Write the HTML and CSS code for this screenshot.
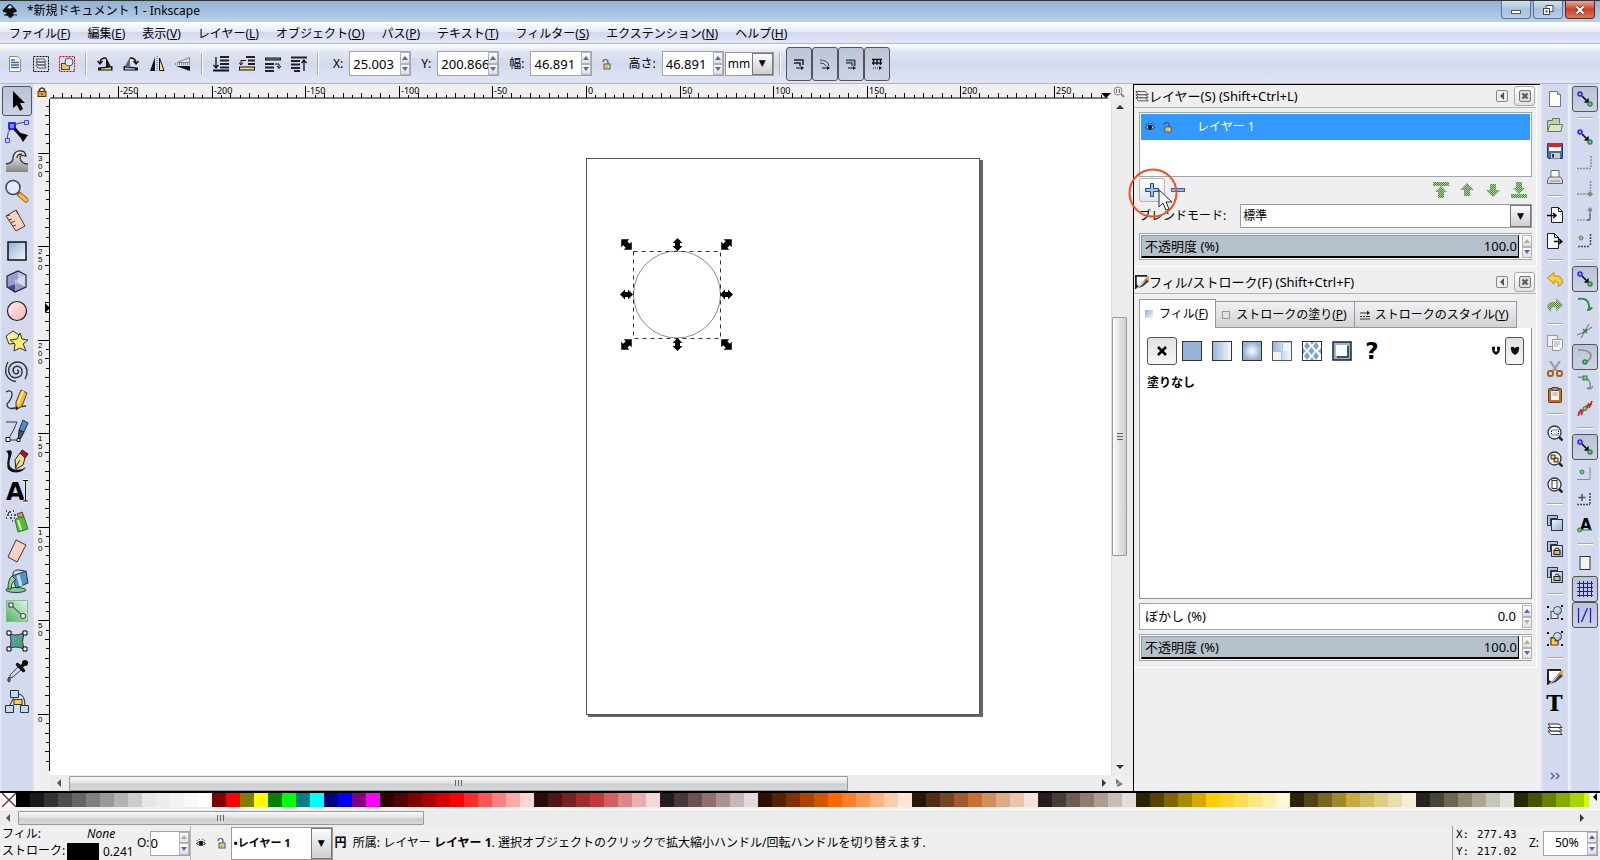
FILE: index.html
```html
<!DOCTYPE html>
<html lang="ja">
<head>
<meta charset="utf-8">
<title>*新規ドキュメント 1 - Inkscape</title>
<link rel="stylesheet" href="styles.css">
</head>
<body>
<svg class="defs" aria-hidden="true">
  <defs>
    <linearGradient id="gBlue" x1="0" y1="0" x2="1" y2="1"><stop offset="0" stop-color="#f4f8fc"/><stop offset="1" stop-color="#8fb0d4"/></linearGradient>
    <linearGradient id="gBlueR" x1="1" y1="0" x2="0" y2="0"><stop offset="0" stop-color="#f4f8fc"/><stop offset="1" stop-color="#9ab6d6"/></linearGradient>
    <linearGradient id="gRect" x1="0" y1="0" x2="1" y2="1"><stop offset="0" stop-color="#8fb0d4"/><stop offset="1" stop-color="#f4f8fc"/></linearGradient>
    <radialGradient id="gRad"><stop offset="0" stop-color="#f8fbff"/><stop offset="1" stop-color="#8fb0d4"/></radialGradient>
    <linearGradient id="gPink" x1="0" y1="0" x2="1" y2="1"><stop offset="0" stop-color="#fff0f0"/><stop offset="1" stop-color="#ffb0b4"/></linearGradient>
    <linearGradient id="gGrey" x1="0" y1="0" x2="0" y2="1"><stop offset="0" stop-color="#ffffff"/><stop offset="1" stop-color="#888888"/></linearGradient>
    <linearGradient id="gGreen" x1="0" y1="1" x2="1" y2="0"><stop offset="0" stop-color="#4fae62"/><stop offset="1" stop-color="#e6f8e8"/></linearGradient>
    <linearGradient id="gMesh" x1="0" y1="0" x2="1" y2="1"><stop offset="0" stop-color="#6a9fd0"/><stop offset="1" stop-color="#3fa050"/></linearGradient>
    <pattern id="pGreen" width="2" height="2" patternUnits="userSpaceOnUse"><rect width="2" height="2" fill="#b4cfa6"/><rect width="1" height="1" fill="#4c8538"/><rect x="1" y="1" width="1" height="1" fill="#4c8538"/></pattern>

    <symbol id="lock" viewBox="0 0 10 10"><path d="M2.500 5V2.500Q5-.5 7.500 2.500V5" fill="none" stroke="#333" stroke-width="1.500"/><rect x="1" y="4.500" width="8" height="5" fill="#e3a716" stroke="#5a3a00"/><path d="M5 6v2" stroke="#222"/></symbol>
    <symbol id="unlock" viewBox="0 0 10 12"><path d="M2 4Q2 1.500 4.500 1.500T7 4v2" fill="none" stroke="#555" stroke-width="1.200"/><rect x="3" y="6" width="6" height="5" fill="#f0dc90" stroke="#555"/><path d="M4 8h3M4 9.500h3" stroke="#b89a30" stroke-width=".7"/></symbol>
    <symbol id="eye" viewBox="0 0 10 10"><path d="M.5 5.500Q5 1 9.500 5.500Q5 9.500.5 5.500Z" fill="#ddd" stroke="#222"/><circle cx="5" cy="5.300" r="2" fill="#111"/><path d="M1.500 3L.8 2M3.500 2L3 .8M6.500 2L7 .8M8.500 3l.7-1" stroke="#222" stroke-width=".8"/></symbol>
    <symbol id="layers" viewBox="0 0 16 16"><g fill="#fff" stroke="#333"><path d="M1 10h11l3 3.500H4z"/><path d="M1 6.500h11l3 3.500H4z"/><path d="M1 3h11l3 3.500H4z"/></g></symbol>
    <symbol id="fillstroke" viewBox="0 0 16 16"><path d="M0 0H14V3L1 16H0z" fill="#222"/><path d="M2 2H14L5 12Q2 13 2 9z" fill="#fff"/><path d="M14 4l2 3-7 6-6 2 5-4z" fill="#444"/><path d="M13 2l3-1v6l-3-2z" fill="#f2a51e"/></symbol>
    <symbol id="snapnode" viewBox="0 0 16 16"><path d="M5 5l6 6M11 7.500V11H7.500" fill="none" stroke="#000" stroke-width="1.500"/><circle cx="3" cy="3" r="2" fill="#aaf" stroke="#2626ff" stroke-width="1.500"/><circle cx="13" cy="13" r="2" fill="#7cc08a" stroke="#258a3c" stroke-width="1.500"/></symbol>
    <symbol id="mag" viewBox="0 0 16 16"><path d="M12 12l3.500 3.500" stroke="#222" stroke-width="2.500"/><circle cx="7.500" cy="7.500" r="6.500" fill="#eef3f7" stroke="#333" stroke-width="1.300"/></symbol>
    <symbol id="dup" viewBox="0 0 16 16"><path d="M.5.5h10v3h-7v7h-3z" fill="#a9c4dd" stroke="#334"/><rect x="4.500" y="4.500" width="11" height="11" fill="url(#gBlue)" stroke="#334"/></symbol>
    <symbol id="grp" viewBox="0 0 16 16"><path d="M0 1h2v2H0zM14 0h2v2h-2zM0 13h2v2H0zM14 13h2v2h-2z" fill="#111"/><rect x="4" y="6.500" width="7" height="7" fill="#dfe8ef" stroke="#444"/><circle cx="10.500" cy="5.500" r="4" fill="url(#gBlue)" stroke="#345"/></symbol>
    <symbol id="page" viewBox="0 0 16 16"><path d="M2.500.5h8l3 3v12h-11z" fill="#fcfcfa" stroke="#777"/><path d="M10.500.5v3h3" fill="#ddd" stroke="#777"/></symbol>
    <symbol id="up" viewBox="0 0 16 16"><path d="M8 1l7 7h-4v6H5V8H1z" fill="url(#pGreen)"/></symbol>
    <symbol id="bars" viewBox="0 0 16 16"><path d="M7 1h9M7 4.500h9M7 8h9M7 11.500h9" stroke="#222" stroke-width="2"/></symbol>
  </defs>
</svg>

<header class="titlebar">
  <svg class="i16" viewBox="0 0 16 16"><path d="M8 1Q9 .8 14.500 7Q16 9 12 9.500Q10 10 12 11Q14 12 11 13Q8 17 6 13Q2 12 4 11Q6 10 3 9.500Q0 9 1 7Q6 .8 8 1z" fill="#111"/><path d="M8 2l3 3-2-.5-1 1.500-1.500-1L5 5.500z" fill="#dfe9f5"/><path d="M2 12h2M13 12h2" stroke="#111"/></svg>
  <h1 class="title">*新規ドキュメント 1 - Inkscape</h1>
  <div class="winbtns">
    <button class="winbtn" aria-label="最小化"><svg class="i12" viewBox="0 0 12 12"><rect x="1.500" y="6.500" width="9" height="3" fill="#fff" stroke="#556"/></svg></button>
    <button class="winbtn" aria-label="元に戻す"><svg class="i12" viewBox="0 0 12 12"><path d="M4 4V1.500h7v6H8" fill="#fff" stroke="#445"/><rect x="1.500" y="4.500" width="6" height="6" fill="#fff" stroke="#445"/><path d="M3.500 6.500h2v2h-2z" fill="#445"/></svg></button>
    <button class="winbtn close" aria-label="閉じる"><svg class="i12" viewBox="0 0 12 12"><path d="M2.500 2.500l7 7m0-7l-7 7" stroke="#633" stroke-width="3.500"/><path d="M2.500 2.500l7 7m0-7l-7 7" stroke="#fff" stroke-width="2"/></svg></button>
  </div>
</header>

<nav class="menubar">
  <a href="#">ファイル(<u>F</u>)</a><a href="#">編集(<u>E</u>)</a><a href="#">表示(<u>V</u>)</a><a href="#">レイヤー(<u>L</u>)</a><a href="#">オブジェクト(<u>O</u>)</a><a href="#">パス(<u>P</u>)</a><a href="#">テキスト(<u>T</u>)</a><a href="#">フィルター(<u>S</u>)</a><a href="#">エクステンション(<u>N</u>)</a><a href="#">ヘルプ(<u>H</u>)</a>
</nav>

<div class="toolbar">
  <button class="tb" aria-label="すべて選択"><svg class="i16" viewBox="0 0 16 16"><path d="M2.500.5h8l3 3v12h-11z" fill="#fff" stroke="#888"/><path d="M4 4h4M4 6.500h8M4 9h8M4 11.500h8" stroke="#36a" stroke-width="1.300"/></svg></button>
  <button class="tb" aria-label="全レイヤー選択"><svg class="i16" viewBox="0 0 16 16"><rect x=".5" y=".5" width="15" height="15" fill="none" stroke="#000" stroke-dasharray="2 1"/><path d="M3 9h8l2 3H5zM3 6h8l2 3H5zM3 3h8l2 3H5z" fill="#eee" stroke="#555"/></svg></button>
  <button class="tb" aria-label="選択解除"><svg class="i16" viewBox="0 0 16 16"><rect x=".5" y=".5" width="15" height="15" fill="none" stroke="#d00" stroke-dasharray="2 1"/><rect x="2.500" y="7.500" width="8" height="6" fill="#f6c54a" stroke="#444"/><circle cx="10" cy="6" r="4" fill="#dbe8f5" stroke="#456"/></svg></button>
  <span class="vsep"></span>
  <button class="tb" aria-label="反時計回り"><svg class="i16" viewBox="0 0 16 16"><path d="M9 1l5 10H9z" fill="#111"/><path d="M1 11.500L15.500 10v4.500H1z" fill="#111"/><path d="M4 12.500l10-1v2H4z" fill="#f2d674"/><path d="M9 2Q3 2 3 7M.5 5L3 8l2.500-3" fill="none" stroke="#111" stroke-width="1.400"/></svg></button>
  <button class="tb" aria-label="時計回り"><svg class="i16" viewBox="0 0 16 16"><path d="M7 1L2 10h5z" fill="#666"/><path d="M15 11.500L.5 10v4.500H15z" fill="#111"/><path d="M2 11.500l10 1v1H2z" fill="#bcd0e4"/><path d="M7 2Q13 2 13 7M10.500 5L13 8l2.500-3" fill="none" stroke="#111" stroke-width="1.400"/></svg></button>
  <button class="tb" aria-label="左右反転"><svg class="i16" viewBox="0 0 16 16"><path d="M6 1v14H1z" fill="#111"/><path d="M10.500 2v12.500H15z" fill="#f5e29a" stroke="#111"/><path d="M8 0v16" stroke="#555" stroke-dasharray="1 1"/></svg></button>
  <button class="tb" aria-label="上下反転"><svg class="i16" viewBox="0 0 16 16"><path d="M14.500 1.500v5H2z" fill="#dde" stroke="#888"/><path d="M15 15v-5H1z" fill="#111"/><path d="M0 8h16" stroke="#555" stroke-dasharray="1 1"/></svg></button>
  <span class="vsep"></span>
  <button class="tb" aria-label="最背面へ"><svg class="i16" viewBox="0 0 16 16"><use href="#bars"/><path d="M0 14.500h16" stroke="#111" stroke-width="2"/><path d="M3 1v11M.5 9L3 12l2.500-3" fill="none" stroke="#111" stroke-width="1.300"/></svg></button>
  <button class="tb" aria-label="背面へ"><svg class="i16" viewBox="0 0 16 16"><path d="M7 1h9M9 4.500h7M9 8h7" stroke="#222" stroke-width="2"/><rect x=".5" y="11" width="15" height="3" fill="#f5d860" stroke="#111"/><path d="M7 4.500H2v4M0 6.500L2 9l2-2.500" fill="none" stroke="#111"/></svg></button>
  <button class="tb" aria-label="前面へ"><svg class="i16" viewBox="0 0 16 16"><path d="M0 11.500h9M0 15h9M0 8h9" stroke="#222" stroke-width="2"/><rect x=".5" y="2" width="15" height="2" fill="#889" stroke="#111"/><path d="M10 8h4v4M12 10l2 2.500 2-2.500" fill="none" stroke="#111"/></svg></button>
  <button class="tb" aria-label="最前面へ"><svg class="i16" viewBox="0 0 16 16"><path d="M0 1.500h16M0 5h9M0 8.500h9M0 12h9M3 15h6" stroke="#222" stroke-width="2"/><path d="M13 15V4M10.500 7L13 4l2.500 3" fill="none" stroke="#111" stroke-width="1.300"/></svg></button>
  <span class="vsep"></span>
  <label class="fld gx">X:<span class="spin"><input class="num" value="25.003"><span class="arrows"><button aria-label="増"></button><button aria-label="減"></button></span></span></label>
  <label class="fld">Y:<span class="spin"><input class="num" value="200.866"><span class="arrows"><button aria-label="増"></button><button aria-label="減"></button></span></span></label>
  <label class="fld">幅:<span class="spin"><input class="num" value="46.891"><span class="arrows"><button aria-label="増"></button><button aria-label="減"></button></span></span></label>
  <button class="lockbtn" aria-label="縦横比を固定"><svg class="i12"><use href="#unlock"/></svg></button>
  <label class="fld last">高さ:<span class="spin"><input class="num" value="46.891"><span class="arrows"><button aria-label="増"></button><button aria-label="減"></button></span></span></label>
  <span class="combo unit"><select aria-label="単位"><option>mm</option></select></span>
  <span class="vsep"></span>
  <div class="toggles">
    <button aria-label="ストローク幅を拡大縮小"><svg class="i12" viewBox="0 0 12 12"><path d="M1 2h9v5M1 5h6v3" fill="none" stroke="#222" stroke-width="1.500"/><path d="M3 10h7" stroke="#111"/><path d="M8 8l3 2-3 2z" fill="#111"/></svg></button>
    <button aria-label="角の半径を拡大縮小"><svg class="i12" viewBox="0 0 12 12"><path d="M1 2q8 0 9 6M1 5q5 0 6 3" fill="none" stroke="#444"/><path d="M3 10h7" stroke="#111"/><path d="M8 8l3 2-3 2z" fill="#111"/></svg></button>
    <button aria-label="グラデーションを変形"><svg class="i12" viewBox="0 0 12 12"><path d="M1 2h9v6H7V5H1z" fill="#7fa6c8"/><path d="M1 2h9v6M1 5h6v3" fill="none" stroke="#222"/><path d="M3 10h7" stroke="#111"/><path d="M8 8l3 2-3 2z" fill="#111"/></svg></button>
    <button aria-label="パターンを変形"><svg class="i12" viewBox="0 0 12 12"><path d="M1 1.500h10M1 5h10M2.500 1v6M6 1v6M9.500 1v6" stroke="#111" stroke-width="1.300"/><path d="M2 10h7" stroke="#111" stroke-dasharray="1 1"/><path d="M8 8l3 2-3 2z" fill="#111"/></svg></button>
  </div>
</div>

<main class="work">
  <aside class="toolbox">
    <button class="on" aria-label="選択"><svg viewBox="0 0 24 24"><path d="M8 2v17l4-3 3 6 3-2-3-6h5z" fill="#000"/></svg></button>
    <button aria-label="ノード"><svg viewBox="0 0 24 24"><path d="M2 21Q2 4 21 3" fill="none" stroke="#444"/><path d="M12 13l11 3-5 7z" fill="#000"/><path d="M9 9l7 8" stroke="#000" stroke-width="3"/><rect x="4" y="4" width="6" height="6" fill="#88f" stroke="#00f" stroke-width="1.500"/><path d="M19.500 1.500h4v4h-4zM.5 19.500h4v4h-4z" fill="#ccf" stroke="#44f"/></svg></button>
    <button aria-label="微調整"><svg viewBox="0 0 24 24"><path d="M1 15Q9 14 8 8Q10 1 16 2Q20 2 21 7Q15 5 15 9Q16 15 23 15V23H1z" fill="url(#gGrey)"/><path d="M1 15Q9 14 8 8Q10 1 16 2Q20 2 21 7Q15 5 15 9Q16 15 23 15M12 9q0-4 5-4" fill="none" stroke="#333" stroke-width="1.300"/></svg></button>
    <button aria-label="ズーム"><svg viewBox="0 0 24 24"><path d="M14 15l7 6" stroke="#a66a10" stroke-width="5" stroke-linecap="round"/><path d="M15 16l6 5" stroke="#ffbf3c" stroke-width="3" stroke-linecap="round"/><circle cx="8" cy="8.500" r="7" fill="#dfeefa" stroke="#444" stroke-width="1.500"/></svg></button>
    <button aria-label="測定"><svg viewBox="0 0 24 24"><path d="M1 7L11 1l9 16-9 5z" fill="#f8d4c4" stroke="#533"/><path d="M11 1l2 4M1 7l4-1M4 11l3-1M6 14l4-2M8 17l3-1" stroke="#533"/></svg></button>
    <button aria-label="矩形"><svg viewBox="0 0 24 24"><rect x="3" y="3" width="18" height="18" fill="url(#gRect)" stroke="#111" stroke-width="1.500"/></svg></button>
    <button aria-label="3Dボックス"><svg viewBox="0 0 24 24"><path d="M2 7l11-5 8 4v12l-11 5-8-5z" fill="#dcdcf4"/><path d="M2 7l11-5v12l-11 4z" fill="#9a9ad0"/><path d="M2 18l11-4 8 4-11 5z" fill="#4a4a94"/><path d="M13 2l8 4v12l-8-4z" fill="#c4c4ea"/><path d="M10 11l11-5v12l-11 5z" fill="#ececfa" opacity=".5"/><path d="M2 7l11-5 8 4v12l-11 5-8-5z" fill="none" stroke="#223" stroke-width="1.200"/></svg></button>
    <button aria-label="円"><svg viewBox="0 0 24 24"><circle cx="12" cy="12" r="9.500" fill="url(#gPink)" stroke="#222" stroke-width="1.200"/></svg></button>
    <button aria-label="星形"><svg viewBox="0 0 24 24"><path d="M1 7l7-5 6 4-1 8-9 1z" fill="#fff2a0" stroke="#333"/><path d="M15 4l2 6 6 1-5 4 3 7-6-3-6 3 1-7-5-4 7-1z" fill="#ffec70" stroke="#333"/></svg></button>
    <button aria-label="らせん"><svg viewBox="0 0 24 24"><path d="M12 11q2 0 1.500 2.500Q11.500 16 9 14Q7 11 9 8.500Q12 6 15.500 8.500Q18.500 12 16 16.500Q12 20 7 18Q2.500 14 4 8.500Q7 2.500 14 3Q20.500 4.500 22 11Q22.500 16 20 20M3 3Q0 8 1 15Q4 22 11 22.500" fill="none" stroke="#333" stroke-width="1.400"/></svg></button>
    <button aria-label="鉛筆"><svg viewBox="0 0 24 24"><path d="M1 3q6-3 6 2T2 15q0 6 8 4t11-2" fill="none" stroke="#333" stroke-width="1.300"/><path d="M16 1l6 3-5 13-6 4 0-8z" fill="#f9b62a" stroke="#543"/><path d="M18 2l-5 13" stroke="#fff3a8" stroke-width="2"/><path d="M11 17v4l3-2z" fill="#222"/></svg></button>
    <button aria-label="ペン"><svg viewBox="0 0 24 24"><path d="M1 3h11q-3 8-9 18h11" fill="none" stroke="#333"/><path d="M18 1l5 3-4 9-5-2z" fill="#4f8ec4" stroke="#234"/><path d="M14 11l5 2-3 6-3 3z" fill="#456" stroke="#222"/><path d="M1 18.500h4v4H1zM12 19.500h3v3h-3z" fill="#fff" stroke="#111"/></svg></button>
    <button aria-label="カリグラフィ"><svg viewBox="0 0 24 24"><path d="M1 2q8-3 5 5-4 11 2 13 8 2 13-2-4 7-14 5Q0 21 3 9q1-5-2-7z" fill="#111"/><path d="M17 1l6 4-3 4-5-4z" fill="#b01818" stroke="#311"/><path d="M15 4l5 5-2 7-7 4-1-9z" fill="#f8dc8c" stroke="#222"/><path d="M10 19l5-8" stroke="#222"/></svg></button>
    <button aria-label="テキスト"><svg viewBox="0 0 24 24"><text x="1" y="21" class="glyphA">A</text><path d="M18 1.500h2l.5 1 .5-1h2M20.500 2v19M18 22h2l.5-1 .5 1h2" fill="none" stroke="#fff" stroke-width="3"/><path d="M18 1.500h2l.5 1 .5-1h2M20.500 2v19M18 22h2l.5-1 .5 1h2" fill="none" stroke="#111" stroke-width="1.200"/></svg></button>
    <button aria-label="スプレー"><svg viewBox="0 0 24 24"><path d="M1 2h1M4 3h2M8 2h1M2 6h2M6 6h1M9 6h2M1 9h1M5 9h2M9 9h1M7 12h1M3 4h1" stroke="#222" stroke-width="1.500"/><path d="M12 5l5-2 2 5-5 1z" fill="#c99c5a" stroke="#543"/><path d="M10 11q2-3 9-3l4 12-10 3z" fill="#5eb637" stroke="#274"/><path d="M13 11l3 10" stroke="#d8f8b8" stroke-width="2"/></svg></button>
    <button aria-label="消しゴム"><svg viewBox="0 0 24 24"><path d="M11 1l10 5-9 17-9-5z" fill="#f9d2c4" stroke="#433"/></svg></button>
    <button aria-label="塗りつぶし"><svg viewBox="0 0 24 24"><ellipse cx="11" cy="21" rx="10" ry="2.500" fill="#7bd08a" stroke="#242"/><path d="M7 7l14-5 2 12-12 5z" fill="#5b92bc" stroke="#234"/><path d="M13 6l3 11" stroke="#bfe0f4" stroke-width="3"/><path d="M7 7q-4 3-4 13h3q0-7 5-9z" fill="#8fd49a" stroke="#242"/><path d="M8 7Q7 1 13 1t8 2" fill="none" stroke="#333"/></svg></button>
    <button aria-label="グラデーション"><svg viewBox="0 0 24 24"><rect x="1.500" y="1.500" width="21" height="21" fill="url(#gGreen)" stroke="#7fc08c"/><path d="M7 7l12 11" stroke="#333"/><path d="M4 4h4v4H4z" fill="#fff" stroke="#333"/><circle cx="18" cy="17" r="2.500" fill="#fff" stroke="#333"/></svg></button>
    <button aria-label="メッシュ"><svg viewBox="0 0 24 24"><path d="M4 4q5 4 15 0-3 9 0 16-9-4-15 0 4-8 0-16z" fill="url(#gMesh)" stroke="#333"/><path d="M2 2h4v4H2zM18 2h4v4h-4zM2 18h4v4H2zM18 18h4v4h-4z" fill="#fff" stroke="#000"/></svg></button>
    <button aria-label="スポイト"><svg viewBox="0 0 24 24"><path d="M14 7l3 3-9 8-3 1 0-3z" fill="#c4dcf0" stroke="#345"/><path d="M12.500 5.500l6 6M16 8l4.500-4.500" stroke="#111" stroke-width="3.500" stroke-linecap="round"/><circle cx="20" cy="4" r="3" fill="#111"/><path d="M4 18q-2.500 4 0 5 2.500-1 0-5" fill="#3975b5" stroke="#234"/></svg></button>
    <button aria-label="コネクター"><svg viewBox="0 0 24 24"><path d="M9 8L4 18M14 5q6 1 6 12" fill="none" stroke="#222"/><path d="M5.500 1.500h8v7h-8zM.5 16.500h8v7h-8zM15.500 16.500h8v7h-8z" fill="#c4d8ee" stroke="#234"/><rect x="9" y="10.500" width="8" height="5" fill="#ffd04a" stroke="#432"/></svg></button>
  </aside>

  <section class="canvas-area" aria-label="キャンバス">
    <div class="corner"><svg class="i10"><use href="#lock"/></svg></div>
    <svg class="ruler-h" id="rulerH"></svg>
    <div class="corner top"><svg class="i12" viewBox="0 0 12 12"><circle cx="5" cy="5" r="4" fill="#eee" stroke="#888"/><path d="M3.500 3v4M6.500 3v4M5 4h.5M5 6h.5" stroke="#777"/><path d="M8 8l3 3" stroke="#888" stroke-width="2"/></svg></div>
    <svg class="ruler-v" id="rulerV"></svg>
    <div class="canvas">
      <svg class="drawing" width="1061" height="676" viewBox="50 99 1061 676">
        <path d="M588 715.500h393.500V160" fill="none" stroke="#666" stroke-width="3"/>
        <rect x="586.500" y="158.500" width="393" height="556" fill="#fff" stroke="#555"/>
        <circle cx="677" cy="294.500" r="43.500" fill="none" stroke="#888"/>
        <rect x="633.500" y="251.500" width="87" height="87" fill="none" stroke="#333" stroke-dasharray="4 4"/>
        <defs><path id="ar" d="M-6.500 0L-1.500-5V-2.500H1.500V-5L6.500 0L1.500 5V2.500H-1.500V5z"/></defs>
        <use href="#ar" transform="translate(626.500 294.500)"/><use href="#ar" transform="translate(726.500 294.500)"/>
        <use href="#ar" transform="translate(677.500 244.500) rotate(90)"/><use href="#ar" transform="translate(677.500 344.500) rotate(90)"/>
        <use href="#ar" transform="translate(626.500 244.500) rotate(45) scale(1.150)"/><use href="#ar" transform="translate(726.500 344.500) rotate(45) scale(1.150)"/>
        <use href="#ar" transform="translate(726.500 244.500) rotate(-45) scale(1.150)"/><use href="#ar" transform="translate(626.500 344.500) rotate(-45) scale(1.150)"/>
      </svg>
    </div>
    <div class="vscroll"><i class="tri up"></i><div class="vtrack"><div class="thumb"><span class="grip"></span></div></div><i class="tri down"></i></div>
    <div class="corner"></div>
    <div class="hscroll"><i class="tri left"></i><div class="htrack"><div class="thumb"><span class="grip"></span></div></div><i class="tri right"></i></div>
    <div class="corner top"><svg class="i10" viewBox="0 0 10 10"><path d="M2 1l7 5-6 3z" fill="#8a9"/><path d="M2 1l3 2-3 3z" fill="#4a8a4a"/><path d="M3 9l6-3-3-1z" fill="#a55"/></svg></div>
  </section>

  <section class="dock">
    <div class="panel">
      <header class="phead"><svg class="i14"><use href="#layers"/></svg><h2>レイヤー(S) (Shift+Ctrl+L)</h2>
        <button class="iconify" aria-label="最小化"><i class="tri left"></i></button>
        <button class="pclose" aria-label="閉じる"><svg class="i12" viewBox="0 0 12 12"><rect x=".5" y=".5" width="11" height="11" rx="1.500" fill="#ddd" stroke="#777"/><path d="M3.500 3.500l5 5m0-5l-5 5" stroke="#555" stroke-width="2"/></svg></button>
      </header>
      <div class="pbody">
        <ul class="layerlist"><li><svg class="i10"><use href="#eye"/></svg><svg class="i12"><use href="#unlock"/></svg><span>レイヤー 1</span></li></ul>
        <div class="layerbtns">
          <button class="addbtn" aria-label="レイヤーを追加"><svg class="i14" viewBox="0 0 14 14"><path d="M5.500.5h3v5h5v3h-5v5h-3v-5h-5v-3h5z" fill="#9cc4ee" stroke="#204a87"/></svg>
            <svg class="mark" viewBox="0 0 50 50"><circle cx="25" cy="25" r="23.500" fill="none" stroke="#f4511e" stroke-width="2"/><path d="M31 22v17l4-4 3 7 3-1-3-7h6z" fill="#fff" stroke="#223"/></svg></button>
          <button class="plain" aria-label="レイヤーを削除"><svg class="i14" viewBox="0 0 14 14"><rect x=".5" y="5.500" width="13" height="3" fill="#8ab4e6" stroke="#3465a4"/></svg></button>
          <span class="grow"></span>
          <button class="plain" aria-label="最上段へ"><svg class="i16" viewBox="0 0 16 16"><path d="M0 0h16v4H0zM8 4l6 6h-3v6H5v-6H2z" fill="url(#pGreen)"/></svg></button>
          <button class="plain" aria-label="上へ"><svg class="i16"><use href="#up"/></svg></button>
          <button class="plain" aria-label="下へ"><svg class="i16 flip"><use href="#up"/></svg></button>
          <button class="plain" aria-label="最下段へ"><svg class="i16" viewBox="0 0 16 16"><path d="M0 12h16v4H0zM8 12l6-6h-3V0H5v6H2z" fill="url(#pGreen)"/></svg></button>
        </div>
        <div class="blend"><label for="blend">ブレンドモード:</label><span class="combo grow"><select id="blend"><option>標準</option></select></span></div>
        <div class="slider"><label class="bar full">不透明度 (%)<input value="100.0"></label><span class="arrows"><button class="dis" aria-label="増"></button><button aria-label="減"></button></span></div>
      </div>
    </div>
    <div class="panel second">
      <header class="phead"><svg class="i14"><use href="#fillstroke"/></svg><h2>フィル/ストローク(F) (Shift+Ctrl+F)</h2>
        <button class="iconify" aria-label="最小化"><i class="tri left"></i></button>
        <button class="pclose" aria-label="閉じる"><svg class="i12" viewBox="0 0 12 12"><rect x=".5" y=".5" width="11" height="11" rx="1.500" fill="#ddd" stroke="#777"/><path d="M3.500 3.500l5 5m0-5l-5 5" stroke="#555" stroke-width="2"/></svg></button>
      </header>
      <div class="pbody tabsbody">
        <div class="tabs">
          <button class="tab cur"><svg class="i10" viewBox="0 0 10 10"><rect x="1" y="1" width="8" height="8" fill="url(#gRect)"/></svg>フィル(<u>F</u>)</button>
          <button class="tab"><svg class="i10" viewBox="0 0 10 10"><rect x="1.500" y="1.500" width="7" height="7" fill="none" stroke="#999"/></svg>ストロークの塗り(<u>P</u>)</button>
          <button class="tab"><svg class="i10" viewBox="0 0 10 10"><path d="M0 3h8M0 6.500h2m1 0h2m1 0h4M0 9h10" stroke="#333"/><path d="M7 .5L10 3 7 5z" fill="#222"/></svg>ストロークのスタイル(<u>Y</u>)</button>
        </div>
        <div class="notebook">
          <div class="paints">
            <button class="pon" aria-label="塗りなし"><svg viewBox="0 0 20 20"><path d="M6 6l8 8m0-8l-8 8" stroke="#000" stroke-width="2.500"/></svg></button>
            <button aria-label="単一色"><svg viewBox="0 0 20 20"><rect x=".5" y=".5" width="19" height="19" fill="#98b4d6" stroke="#333"/></svg></button>
            <button aria-label="線形グラデーション"><svg viewBox="0 0 20 20"><rect x=".5" y=".5" width="19" height="19" fill="url(#gBlueR)" stroke="#333"/></svg></button>
            <button aria-label="放射グラデーション"><svg viewBox="0 0 20 20"><rect x=".5" y=".5" width="19" height="19" fill="url(#gRad)" stroke="#333"/></svg></button>
            <button aria-label="メッシュ"><svg viewBox="0 0 20 20"><rect x=".5" y=".5" width="19" height="19" fill="#8fb0d4" stroke="#555"/><path d="M1 1h9v9H1zM10 10h9v9h-9z" fill="url(#gBlueR)"/><path d="M10 1h9v9h-9zM1 10h9v9H1z" fill="#fff" opacity=".25"/><path d="M11 2h8v8h-8zM1 11h8v8H1z" fill="#fff" opacity=".8"/></svg></button>
            <button aria-label="パターン"><svg viewBox="0 0 20 20"><rect x=".5" y=".5" width="19" height="19" fill="#fff" stroke="#333"/><path d="M5 1l3 4-3 4-3-4zM14 1l3 4-3 4-3-4zM5 11l3 4-3 4-3-4zM14 11l3 4-3 4-3-4zM9.500 6l3 4-3 4-3-4zM1 7l3 3-3 3zM19 7l-3 3 3 3zM8 1h4L10 4zM8 19h4l-2-3z" fill="#7fa3cd"/></svg></button>
            <button aria-label="スウォッチ"><svg viewBox="0 0 20 20"><rect x="1" y="1" width="18" height="18" fill="#98b4d6" stroke="#222" stroke-width="1.500"/><rect x="4" y="4" width="11" height="11" fill="#fff"/><path d="M16 5v11H5" fill="none" stroke="#234" stroke-width="1.500"/></svg></button>
            <button aria-label="未設定"><b>?</b></button>
            <span class="grow"></span>
            <button class="rule" aria-label="偶奇規則"><svg class="i10" viewBox="0 0 10 10"><path d="M1 1q2-1 3 0v2q-1 1 0 2.500h2Q7 4 6 3V1q1-1 3 0 1 5-4 8Q0 6 1 1z" fill="#111"/></svg></button>
            <button class="rule pon" aria-label="非ゼロ規則"><svg class="i10" viewBox="0 0 10 10"><path d="M1 1q2-1 4 1 2-2 4-1 1 5-4 8Q0 6 1 1z" fill="#111"/></svg></button>
          </div>
          <strong>塗りなし</strong>
        </div>
        <div class="slider"><label class="bar">ぼかし (%)<input value="0.0"></label><span class="arrows"><button aria-label="増"></button><button class="dis" aria-label="減"></button></span></div>
        <div class="slider"><label class="bar full">不透明度 (%)<input value="100.0"></label><span class="arrows"><button class="dis" aria-label="増"></button><button aria-label="減"></button></span></div>
      </div>
    </div>
  </section>

  <aside class="sidebar cmds">
    <button aria-label="新規"><svg><use href="#page"/></svg></button>
    <button aria-label="開く"><svg viewBox="0 0 16 16"><path d="M.5 14V3.500h5V1.500h7v5" fill="#c4cfa8" stroke="#687a50"/><path d="M3 7.500h12.500L14 14.500H.5z" fill="#dbe4c4" stroke="#687a50"/></svg></button>
    <button aria-label="保存"><svg viewBox="0 0 16 16"><path d="M.5.500h15v15h-14l-1-1z" fill="#3e6ea8" stroke="#1e3c66"/><path d="M2 0h12v4H2z" fill="#d22"/><path d="M2 4h12v4H2z" fill="#fff"/><rect x="4" y="10" width="9" height="5.500" fill="#ccc"/><rect x="5" y="11" width="2" height="3.500" fill="#234"/></svg></button>
    <button aria-label="印刷"><svg viewBox="0 0 16 16"><path d="M4 8V1.500h8V8" fill="#fff" stroke="#666"/><path d="M2.500 8h11l2 3v3.500H.5V11z" fill="#ddd" stroke="#666"/><path d="M3 12h10" stroke="#888"/></svg></button>
    <hr>
    <button aria-label="インポート"><svg viewBox="0 0 16 16"><path d="M4.500.5h7l4 4v11h-11z" fill="#f6f6f6" stroke="#222"/><path d="M11.500.5v4h4" fill="none" stroke="#222"/><path d="M0 8.500h8M6 6l3 2.500L6 11" stroke="#000" stroke-width="1.400" fill="none"/></svg></button>
    <button aria-label="エクスポート"><svg viewBox="0 0 16 16"><path d="M.5.500h7l4 4v11H.5z" fill="#f6f6f6" stroke="#222"/><path d="M7.500.5v4h4" fill="none" stroke="#222"/><path d="M7 8.500h8M12 6l3 2.500-3 2.500" stroke="#000" stroke-width="1.400" fill="none"/></svg></button>
    <hr>
    <button aria-label="元に戻す"><svg viewBox="0 0 16 16"><path d="M.5 7L7 1.500V5Q15 4 15.500 11 15 14 11 15.500 13 10 7 10v3z" fill="#f6d13c" stroke="#b8891c"/></svg></button>
    <button aria-label="やり直し"><svg viewBox="0 0 16 16"><path d="M16 8L9 1v4Q1 4 0 10q1 3 4 5-1-5 5-5v4z" fill="url(#pGreen)"/></svg></button>
    <hr>
    <button aria-label="コピー"><svg viewBox="0 0 16 16"><path d="M.5.5h10v11H.5z" fill="#eee" stroke="#999"/><path d="M5.500 4.500h10v8l-3 3h-7z" fill="#f6f6f6" stroke="#999"/><path d="M7 7h6M7 9h6M7 11h4" stroke="#aaa"/></svg></button>
    <button aria-label="切り取り"><svg viewBox="0 0 16 16"><path d="M3 0l7 10M13 0L6 10" stroke="#999" stroke-width="2"/><rect x="1" y="10" width="5" height="5" rx="2" fill="none" stroke="#a8621c" stroke-width="2"/><rect x="10" y="10" width="5" height="5" rx="2" fill="none" stroke="#a8621c" stroke-width="2"/></svg></button>
    <button aria-label="貼り付け"><svg viewBox="0 0 16 16"><rect x="1.500" y="1.500" width="13" height="14" rx="1" fill="#b87320" stroke="#6a3d08"/><path d="M4 4h8v9H4z" fill="#f5f5f5"/><path d="M5 .5h6v3H5z" fill="#999" stroke="#444"/><path d="M5.500 6h5M5.500 8h5" stroke="#999"/></svg></button>
    <hr>
    <button aria-label="選択をズーム"><svg viewBox="0 0 16 16"><use href="#mag"/><rect x="4.500" y="5" width="7" height="5" fill="none" stroke="#111" stroke-dasharray="1 1"/></svg></button>
    <button aria-label="描画をズーム"><svg viewBox="0 0 16 16"><use href="#mag"/><path d="M4 4h4v4H4zM7 7h4v4H7z" fill="#f6d48a" stroke="#321"/></svg></button>
    <button aria-label="ページをズーム"><svg viewBox="0 0 16 16"><use href="#mag"/><rect x="5" y="3.500" width="5" height="8" fill="#fff" stroke="#333"/></svg></button>
    <hr>
    <button aria-label="複製"><svg><use href="#dup"/></svg></button>
    <button aria-label="クローン"><svg viewBox="0 0 16 16"><use href="#dup"/><path d="M8 10V8q2-2 4 0v2" fill="none" stroke="#222"/><rect x="7" y="9.500" width="6" height="4" fill="#f2b830" stroke="#222"/></svg></button>
    <button aria-label="クローン解除"><svg viewBox="0 0 16 16"><use href="#dup"/><path d="M8 8q2-2 4 0v2" fill="none" stroke="#222"/><rect x="7" y="9.500" width="6" height="4" fill="#a7d48a" stroke="#222"/></svg></button>
    <hr>
    <button aria-label="グループ化"><svg><use href="#grp"/></svg></button>
    <button aria-label="グループ解除"><svg viewBox="0 0 16 16"><use href="#grp"/><path d="M4 7h4v3h3v4H4z" fill="#fbcf4e" stroke="#631"/></svg></button>
    <hr>
    <button aria-label="フィル/ストローク"><svg><use href="#fillstroke"/></svg></button>
    <button aria-label="テキスト"><b class="serif">T</b></button>
    <button aria-label="レイヤー"><svg><use href="#layers"/></svg></button>
    <span class="grow"></span>
    <button class="more" aria-label="その他"><svg viewBox="0 0 16 16"><path d="M4 5l3 3-3 3M9 5l3 3-3 3" fill="none" stroke="#55a" stroke-width="1.300"/></svg></button>
  </aside>
  <aside class="sidebar snap">
    <button class="on" aria-label="スナップ"><svg><use href="#snapnode"/></svg></button>
    <hr>
    <button aria-label="境界枠"><svg><use href="#snapnode"/></svg></button>
    <button aria-label="枠の辺"><svg viewBox="0 0 16 16"><path d="M0 13.500h14M14 1v12" stroke="#7a9a80" stroke-width="1.500" stroke-dasharray="2 1" fill="none"/></svg></button>
    <button aria-label="枠の角"><svg viewBox="0 0 16 16"><path d="M0 13h10M13.500 0v10" stroke="#889" stroke-width="1.500" stroke-dasharray="2 1"/><path d="M13 10l3 3-3 3-3-3z" fill="#6f9278"/></svg></button>
    <button aria-label="辺の中点"><svg viewBox="0 0 16 16"><path d="M0 13h12" stroke="#778" stroke-dasharray="2 1"/><path d="M13 6v7h-3" stroke="#333" fill="none"/><path d="M13 0l2.500 3L13 6l-2.500-3z" fill="#6f9278"/></svg></button>
    <button aria-label="中心"><svg viewBox="0 0 16 16"><path d="M1 13.500h12M13.500 1v12" stroke="#445" stroke-width="1.500" stroke-dasharray="2 1"/><circle cx="4" cy="5" r="2" fill="#9cb8a4" stroke="#5f8a6a"/></svg></button>
    <hr>
    <button class="on" aria-label="ノード"><svg><use href="#snapnode"/></svg></button>
    <button aria-label="パス"><svg viewBox="0 0 16 16"><path d="M1 2q12-2 11 10M10 13q4 0 5-3" fill="none" stroke="#258a3c" stroke-width="1.800"/></svg></button>
    <button aria-label="交点"><svg viewBox="0 0 16 16"><path d="M0 12q7-2 15-8M4 15L12 1" fill="none" stroke="#888" stroke-width="1.300"/><path d="M6 6l4 4m0-4l-4 4" stroke="#258a3c" stroke-width="1.500"/></svg></button>
    <button class="on" aria-label="シャープノード"><svg viewBox="0 0 16 16"><path d="M1 1q12 0 13 5 0 5-6 7" fill="none" stroke="#888" stroke-width="1.500"/><circle cx="8" cy="13" r="2" fill="#7cc08a" stroke="#258a3c" stroke-width="1.500"/></svg></button>
    <button aria-label="スムーズノード"><svg viewBox="0 0 16 16"><path d="M1 2q11 0 12 6t-3 5q4 2 6-2" fill="none" stroke="#888" stroke-width="1.500"/><rect x="6" y="1" width="4" height="4" fill="#7cc08a" stroke="#258a3c"/></svg></button>
    <button aria-label="線の中点"><svg viewBox="0 0 16 16"><path d="M1 15L4 8M4 14l3-7M9 9l3-7M12 7l3-7M1 12l6-3M9 5l6-2" stroke="#d22" stroke-width="1.700"/><circle cx="8" cy="7.500" r="2" fill="#7cc08a" stroke="#258a3c"/></svg></button>
    <hr>
    <button class="on" aria-label="その他の点"><svg><use href="#snapnode"/></svg></button>
    <button aria-label="オブジェクト中心"><svg viewBox="0 0 16 16"><path d="M0 14.500h13V2" fill="none" stroke="#889"/><circle cx="5" cy="7" r="2" fill="#7cc08a" stroke="#258a3c"/></svg></button>
    <button aria-label="回転中心"><svg viewBox="0 0 16 16"><path d="M5 3v7M1.500 6.500h7" stroke="#556" stroke-width="1.500"/><path d="M0 13.500h13M13 2v12" stroke="#445" stroke-width="1.500" stroke-dasharray="2 1"/></svg></button>
    <button aria-label="ベースライン"><svg viewBox="0 0 16 16"><text x="3" y="13" class="glyphSm">A</text><path d="M2 13h13" stroke="#258a3c"/><circle cx="2.500" cy="13" r="2" fill="#7cc08a" stroke="#258a3c"/></svg></button>
    <hr>
    <button aria-label="ページ境界"><svg viewBox="0 0 16 16"><rect x="3" y="1.500" width="10" height="13" fill="#f2f2f2" stroke="#333"/></svg></button>
    <button class="on" aria-label="グリッド"><svg viewBox="0 0 16 16"><path d="M2.500 0v16M6.500 0v16M10.500 0v16M14.500 0v16M0 2.500h16M0 6.500h16M0 10.500h16M0 14.500h16" stroke="#11f" stroke-width="1"/></svg></button>
    <button class="on" aria-label="ガイド"><svg viewBox="0 0 16 16"><path d="M1.500 1v15M13.500 1v15M4.500 15L10.500 1" stroke="#11f" stroke-width="1.200"/></svg></button>
  </aside>
</main>

<div class="palette-row"><div class="palette" id="palette"><span class="sw none"><svg viewBox="0 0 14 14"><path d="M0 0l14 14M14 0L0 14" stroke="#802020" stroke-width="1.300"/></svg></span></div><div class="palmenu"><i class="tri left big"></i></div></div>
<div class="palscroll"><i class="tri left"></i><div class="ptrack"><div class="thumb"><span class="grip"></span></div></div><i class="tri right"></i></div>

<footer class="status">
  <div class="style">
    <span>フィル:</span><em>None</em>
    <span>ストローク:</span><div class="stroke"><i class="swatch"></i><span>0.241</span></div>
  </div>
  <label class="opac">O:<span class="spin tall"><input class="num" value="0"><span class="arrows"><button class="dis" aria-label="増"></button><button aria-label="減"></button></span></span></label>
  <span class="fsep"></span>
  <button class="plainicon" aria-label="表示"><svg class="i10"><use href="#eye"/></svg></button>
  <button class="plainicon" aria-label="ロック"><svg class="i12"><use href="#unlock"/></svg></button>
  <span class="combo layersel"><select aria-label="現在のレイヤー"><option>•レイヤー 1</option></select></span>
  <p class="msg"><b>円</b>&nbsp; 所属: レイヤー <b>レイヤー 1</b>. 選択オブジェクトのクリックで拡大縮小ハンドル/回転ハンドルを切り替えます.</p>
  <dl class="coords"><dt>X:</dt><dd>277.43</dd><dt>Y:</dt><dd>217.02</dd></dl>
  <label class="zoom">Z:<span class="spin tall"><input class="num" value="50%"><span class="arrows"><button aria-label="増"></button><button aria-label="減"></button></span></span></label>
</footer>
<script src="app.js"></script>
</body>
</html>
```
FILE: styles.css
```css
* { box-sizing: border-box; }
body { margin: 0; min-height: 100vh; display: flex; flex-direction: column; background: #efefef; color: #000; font: 12px/16px "Noto Sans", "Noto Sans CJK JP", sans-serif; overflow: hidden; }
button { margin: 0; padding: 0; border: 0; background: none; color: inherit; font: inherit; display: flex; align-items: center; justify-content: center; }
input, select { font: inherit; color: inherit; margin: 0; border: 0; background: none; padding: 0; border-radius: 0; }
h1, h2, p, ul, dl, dd { margin: 0; padding: 0; }
svg { display: block; flex: none; }
.defs { position: absolute; width: 0; height: 0; }
.i10 { width: 10px; height: 10px; }
.i12 { width: 12px; height: 12px; }
.i14 { width: 14px; height: 14px; }
.i16 { width: 16px; height: 16px; }
.flip { transform: rotate(180deg); }
.grow { flex: 1; }

.titlebar { height: 22px; display: flex; align-items: center; padding: 0 0 2px 2px; border-top: 1px solid #333; background: linear-gradient(#92b0d2, #b8d0ea); }
.title { flex: 1; margin-left: 9px; font-size: 12px; font-weight: 400; }
.winbtns { display: flex; gap: 2px; padding-right: 5px; align-self: flex-start; }
.winbtn { width: 30px; height: 18px; border: 1px solid #5d7492; border-top: 0; border-radius: 0 0 4px 4px; background: linear-gradient(#d4e2f1, #a9c1dc 50%, #b9cee6); }
.winbtn.close { background: linear-gradient(#e6a79b, #c9432c 50%, #d8775c); border-color: #5b2a26; }

.menubar { height: 22px; display: flex; align-items: center; gap: 17px; padding: 2px 9px 0; border-bottom: 1px solid #b0b7c8; background: linear-gradient(#fff, #e5eaf6 45%, #d3daed 50%, #e0e6f6); }
.menubar a { color: inherit; text-decoration: none; white-space: nowrap; }

.toolbar { height: 40px; display: flex; align-items: center; padding-left: 2px; border-bottom: 1px solid #b0b7c8; background: linear-gradient(#fdfdff, #e2e7f5 20%, #d3daed 50%, #dfe5f5); }
.tb { width: 26px; height: 26px; }
.vsep { width: 2px; height: 22px; margin: 0 5px; background: #aaa; border-right: 1px solid #fff; }
.fld { display: flex; align-items: center; gap: 6px; margin-right: 10px; white-space: nowrap; }
.gx { margin-left: 9px; }
.spin { display: flex; width: 62px; height: 25px; border: 1px solid #a0a4ae; background: #fff; }
.spin .num { flex: 1; width: 0; padding-left: 3px; font-size: 13px; }
.arrows { width: 10px; flex: none; display: flex; flex-direction: column; background: #f0f0f0; }
.arrows button { flex: 1; border: 1px solid #b4b4b4; background: linear-gradient(#fdfdfd, #dedede); }
.arrows button::after { content: ""; border: 3px solid transparent; border-top: 0; border-bottom: 4px solid #5068b8; }
.arrows button:last-child::after { border-bottom: 0; border-top: 4px solid #5068b8; }
.arrows button.dis::after { border-bottom-color: #aaa; border-top-color: #aaa; }
.lockbtn { width: 20px; margin: 0 12px 0 -6px; }
.last { margin-right: 1px; }
.combo { position: relative; display: flex; border: 1px solid #9a9a9a; background: #fff; }
.combo select { appearance: none; flex: 1; width: 0; padding: 0 20px 0 2px; }
.combo::after { content: "▼"; position: absolute; right: 0; top: 0; bottom: 0; width: 19px; display: flex; align-items: center; justify-content: center; border: 1px solid #777; background: linear-gradient(#fcfcfc, #cecece); font: 9px/9px "DejaVu Sans", sans-serif; pointer-events: none; }
.unit { width: 49px; height: 24px; }
.toggles { display: flex; }
.toggles button { width: 26px; height: 34px; border: 1px solid #555; border-radius: 3px; background: linear-gradient(#bdc4d6, #cdd4e6); }

.work { flex: 1; display: flex; min-height: 0; }
.toolbox { width: 34px; padding: 2px 1px 0 2px; background: linear-gradient(90deg, #e8edf9, #d3daed 6%, #d3daed); border-right: 1px solid #e4e4ea; }
.toolbox button { width: 30px; height: 30px; border-radius: 3px; }
.toolbox svg { width: 24px; height: 24px; overflow: visible; }
.on { border: 1px solid #555; background: linear-gradient(#bcc3d6, #cbd2e6); }
.glyphA { font: bold 24px "DejaVu Sans", sans-serif; }
.glyphSm { font: bold 15px "DejaVu Sans", sans-serif; }

.canvas-area { flex: 1; min-width: 0; display: grid; grid-template: 15px minmax(0, 1fr) 16px / 16px minmax(0, 1fr) 22px; }
.corner { display: flex; align-items: center; justify-content: center; }
.corner.top { padding-right: 6px; }
.ruler-h, .ruler-v { width: 100%; height: 100%; font: 9px "Noto Sans", sans-serif; }
.ruler-v { font: 8px "Liberation Sans", sans-serif; }
.canvas { background: #fff; overflow: hidden; }
.vscroll { display: flex; flex-direction: column; align-items: center; padding: 6px 6px 6px 0; background: #ececec; border-left: 1px solid #ddd; }
.vtrack { flex: 1; width: 15px; display: flex; flex-direction: column; padding-top: 208px; }
.vtrack .thumb { height: 239px; width: 15px; background: linear-gradient(90deg, #fafafa, #cfd0d2); }
.vtrack .grip { transform: rotate(90deg); }
.thumb { border: 1px solid #999; border-radius: 1px; background: linear-gradient(#f8f8f8, #e4e4e4 45%, #cdced0 55%, #d8d8da); display: flex; align-items: center; justify-content: center; }
.grip { width: 8px; height: 6px; background: repeating-linear-gradient(90deg, #666 0 1px, #ddd 1px 3px); }
.hscroll { display: flex; align-items: center; padding: 0 5px 0 7px; background: #ececec; }
.htrack { flex: 1; padding-left: 8px; margin-right: 8px; }
.htrack .thumb { width: 76%; height: 15px; }
.tri { display: block; flex: none; width: 0; height: 0; border: 4px solid transparent; }
.tri.left { border-right-color: #555; border-left: 0; }
.tri.right { border-left-color: #333; border-right: 0; }
.tri.up { border-bottom-color: #333; border-top: 0; }
.tri.down { border-top-color: #333; border-bottom: 0; }
.tri.big { border-right-color: #000; }

.dock { width: 407px; flex: none; border-left: 1px solid #000; border-top: 1px solid #000; background: #efefef; }
.panel { margin-right: 3px; border-right: 1px solid #fff; border-bottom: 1px solid #fff; }
.phead { height: 23px; display: flex; align-items: center; padding-right: 1px; border-bottom: 1px solid #b4b4b4; }
.phead .i14 { margin-left: 1px; }
.phead h2 { flex: 1; font-size: 13px; font-weight: 400; white-space: nowrap; }
.iconify { width: 12px; height: 12px; border: 1px solid #888; border-radius: 2px; margin-right: 6px; background: #eee; }
.pclose { width: 21px; height: 20px; border: 1px solid #aaa; border-radius: 3px; background: linear-gradient(#fff, #e2e2e2); }
.pbody { padding: 4px 4px 6px 5px; display: flex; flex-direction: column; }
.layerlist { list-style: none; height: 65px; border: 1px solid #a0a4ae; background: #fff; padding: 1px; }
.layerlist li { height: 26px; display: flex; align-items: center; padding-left: 4px; gap: 6px; background: #39f; color: #fff; }
.layerlist span { margin-left: 18px; }
.layerbtns { display: flex; height: 26px; align-items: center; }
.addbtn { position: relative; width: 26px; height: 24px; border: 1px solid #b4b4b4; border-radius: 3px; background: linear-gradient(#fff, #e4e4e4); }
.mark { position: absolute; left: -12px; top: -11px; width: 50px; height: 50px; z-index: 2; }
.plain { width: 26px; height: 24px; }
.blend { display: flex; align-items: center; gap: 14px; height: 26px; }
.blend .combo { height: 24px; }
.slider { display: flex; height: 27px; margin-top: 4px; border: 1px solid #a0a4ae; border-right: 0; background: #fff; padding: 1px 0 1px 1px; font-size: 13px; }
.bar { flex: 1; display: flex; align-items: center; padding: 0 0 2px 4px; }
.bar input { flex: 1; width: 0; text-align: right; padding-right: 2px; }
.bar.full { background: #b5c2cc; border: 1px solid #8a98a4; border-right: 1px solid #000; border-bottom: 2px solid #000; padding: 0 0 0 3px; }
.bar.full input { padding-right: 1px; }
.slider .arrows { margin-left: 3px; }
.slider .bar:not(.full) { margin-right: 1px; }
.second { margin-top: 4px; }
.tabsbody { padding-top: 5px; }
.tabs { display: flex; align-items: flex-end; height: 29px; }
.tab { height: 27px; padding: 0 7px 0 5px; border: 1px solid #9098a8; border-left: 0; white-space: nowrap; background: linear-gradient(#f2f2f2, #d2d2d2); }
.tab svg { margin-right: 5px; }
.tab.cur { height: 29px; border-left: 1px solid #9098a8; border-bottom: 0; background: #fff; padding: 0 7px 0 4px; }
.notebook { height: 271px; border: 1px solid #8a8f9c; border-top: 0; background: #fff; padding: 8px 7px; }
.paints { display: flex; align-items: center; height: 30px; margin-bottom: 9px; }
.paints button { width: 30px; height: 28px; }
.paints button svg:not(.i10) { width: 20px; height: 20px; }
.paints .pon { border: 1px solid #555; border-radius: 3px; background: linear-gradient(#e2e2e2, #f6f6f6); }
.paints b { font: bold 23px/24px "DejaVu Sans", sans-serif; }
.paints .rule { width: 19px; }

.sidebar { width: 31px; flex: none; display: flex; flex-direction: column; align-items: center; padding: 2px 0; background: linear-gradient(90deg, #eef2fb, #d3daed 10%, #d3daed 94%, #eef2fb); }
.sidebar.cmds { width: 29px; }
.sidebar button { width: 26px; height: 26px; border-radius: 3px; flex: none; }
.sidebar button svg { width: 16px; height: 16px; }
.sidebar hr { width: 16px; height: 2px; margin: 5px 0; border: 0; border-top: 1px solid #aaa; background: #fff; flex: none; }
.serif { font: bold 22px/22px "DejaVu Serif", serif; }

.palette-row { display: flex; height: 19px; border-top: 2px solid #000; border-bottom: 1px solid #fff; padding-left: 2px; }
.palette { flex: 1; display: flex; height: 14px; overflow: hidden; }
.sw { flex: 0 0 14px; height: 14px; }
.sw.none { background: #fff; }
.palmenu { width: 11px; flex: none; padding-left: 4px; }
.palscroll { height: 16px; display: flex; align-items: center; padding: 0 16px 0 6px; background: #ececec; }
.ptrack { flex: 1; padding-left: 8px; }
.ptrack .thumb { width: 26%; height: 14px; }

.status { height: 34px; display: flex; align-items: center; }
.style { display: grid; grid-template: 17px 17px / 65px 70px; padding-left: 2px; white-space: nowrap; }
.style em { padding-left: 20px; }
.stroke { display: flex; align-items: center; gap: 4px; }
.swatch { width: 32px; height: 17px; background: #000; }
.opac, .zoom { display: flex; align-items: center; }
.opac .spin { width: 40px; }
.opac .num { padding-left: 0; }
.fsep { width: 1px; height: 34px; background: #bbb; }
.plainicon { width: 20px; height: 20px; }
.layersel { width: 102px; height: 33px; font-weight: 700; font-size: 11px; }
.msg { flex: 1; padding-left: 2px; white-space: nowrap; overflow: hidden; }
.coords { display: grid; grid-template: 17px 17px / 21px 52px; align-items: center; border-left: 1px solid #999; padding-left: 3px; font: 11px/17px "DejaVu Sans Mono", monospace; }
.zoom { gap: 4px; padding-right: 2px; }
.zoom .spin { width: 55px; }
.zoom .num { padding-left: 11px; font-size: 12px; }
```
FILE: app.js
```js
const NS = 'http://www.w3.org/2000/svg';
const MM = 1.8715;

function add(parent, name, attrs, text) {
  const el = document.createElementNS(NS, name);
  for (const key in attrs) el.setAttribute(key, attrs[key]);
  if (text !== undefined) el.textContent = text;
  parent.appendChild(el);
}

function drawHorizontal(svg, zero, pointer) {
  let d = 'M0 14h' + (pointer + 2);
  for (let mm = -285; mm < 280; mm += 5) {
    const x = Math.round(zero + mm * MM);
    const major = mm % 50 === 0;
    if (x > 1058) break;
    d += `M${x + 0.5} 14V${major ? 2 : mm % 10 === 0 ? 9 : 11}`;
    if (major) add(svg, 'text', { x: x + 2, y: 10 }, String(mm));
  }
  add(svg, 'path', { d, stroke: '#000', fill: 'none' });
  add(svg, 'path', { d: `M${pointer - 5} 9h10l-5 5z` });
}

function drawVertical(svg, zero, pointer) {
  let d = 'M15.5 0V672';
  for (let mm = -30; mm < 330; mm += 5) {
    const y = Math.round(zero - mm * MM);
    const major = mm % 50 === 0;
    if (y < 2 || y > 670) continue;
    d += `M16 ${y + 0.5}H${major ? 4 : mm % 10 === 0 ? 11 : 12}`;
    if (major) [...String(mm)].forEach((c, i) => add(svg, 'text', { x: 4, y: y + 8 + i * 8 }, c));
  }
  add(svg, 'path', { d, stroke: '#000', fill: 'none' });
  add(svg, 'path', { d: `M11 ${pointer - 5}v10l5-5z` });
}

drawHorizontal(document.getElementById('rulerH'), 536, 1056);
drawVertical(document.getElementById('rulerV'), 615, 209);

const colors = `000000 1a1a1a 333333 4d4d4d 666666 808080 999999 b3b3b3 cccccc e6e6e6 ececec f2f2f2 f9f9f9 ffffff
800000 ff0000 808000 ffff00 008000 00ff00 008080 00ffff 000080 0000ff 800080 ff00ff
2b0000 550000 800000 aa0000 d40000 ff0000 ff2a2a ff5555 ff8080 ffaaaa ffd5d5
280b0b 501616 782121 a02c2c c83737 d35f5f de8787 e9afaf f4d7d7
241c1c 483737 6c5353 916f6f ac9393 c8b7b7 e3dbdb
2b1100 552200 803300 aa4400 d45500 ff6600 ff7f2a ff9955 ffb380 ffccaa ffe6d5
28170b 502d16 784421 a05a2c c87137 d38d5f deaa87 e9c6af f4e3d7
241f1c 483e37 6c5d53 917c6f ac9d93 c8beb7 e3dedb
2b2200 554400 806600 aa8800 d4aa00 ffcc00 ffd42a ffdd55 ffe680 ffeeaa fff6d5
28220b 504416 786721 a0892c c8ab37 d3bc5f decd87 e9ddaf f4eed7
24221c 484537 6c6753 918a6f aca793 c8c4b7 e3e2db
222b00 445500 668000 88aa00 aad400 ccff00`.split(/\s+/);
const palette = document.getElementById('palette');
for (const c of colors) {
  const sw = document.createElement('span');
  sw.className = 'sw';
  sw.style.backgroundColor = '#' + c;
  palette.appendChild(sw);
}
```
